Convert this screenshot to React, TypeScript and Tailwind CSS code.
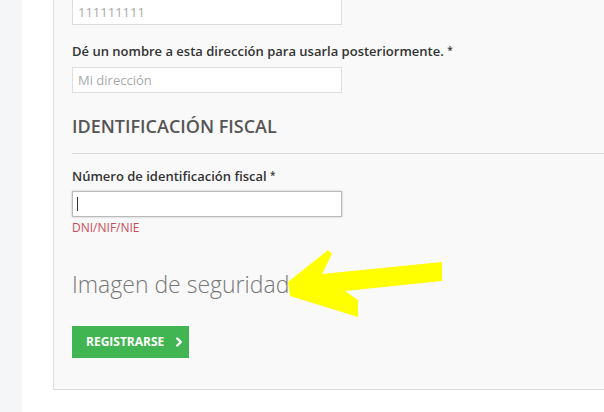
import { ChevronRight } from 'lucide-react'

function Label({ text }: { text: string }) {
  return (
    <label className="block text-[13px] leading-[18px] font-semibold text-[#333]">
      {text} <sup className="text-[10px] relative -top-[2px]">*</sup>
    </label>
  )
}

export default function App() {
  return (
    <div className="flex h-[412px] w-[604px] overflow-hidden bg-white font-['Open_Sans',sans-serif]">
      {/* left strip */}
      <div className="w-[22px] shrink-0 bg-[#f5f6f8]" />
      <div className="flex-1 pl-[31px] relative">
        {/* form card */}
        <div className="w-[600px] h-[391px] border-l border-b border-[#dcdcdc] bg-[#f9f9f9] pl-[18px] pb-[32px]">
          <input
            className="-mt-px block w-[270px] h-[26px] border border-[#ddd] bg-white px-[5px] text-[13px] placeholder:text-[#aaa] outline-none"
            placeholder="111111111"
          />

          <div className="mt-[17px]">
            <Label text="Dé un nombre a esta dirección para usarla posteriormente." />
          </div>
          <input
            className="mt-[7px] block w-[270px] h-[26px] border border-[#ddd] bg-white px-[5px] text-[13px] placeholder:text-[#aaa] outline-none"
            placeholder="Mi dirección"
          />

          <h2 className="mt-[21px] text-[18px] leading-[24px] font-semibold text-[#555]">
            IDENTIFICACIÓN FISCAL
          </h2>
          <div className="mt-[15px] h-px bg-[#ddd]" />

          <div className="mt-[13px]">
            <Label text="Número de identificación fiscal" />
          </div>
          <div className="mt-[6px] w-[270px] h-[26px] border border-[#bbb] bg-white shadow-[0_0_2px_rgba(0,0,0,0.25)] flex items-center pl-[4px]">
            <span className="w-px h-[14px] bg-[#333]" />
          </div>
          <p className="mt-[3px] text-[12px] leading-[16px] text-[#cc4b57]">DNI/NIF/NIE</p>

          <h3 className="mt-[32px] text-[23px] leading-[32px] font-light text-[#777]">
            Imagen de seguridad
          </h3>

          <button className="mt-[26px] h-[32px] w-[117px] bg-[#41b552] text-white text-[12px] font-bold flex items-center pl-[14px] gap-[8px]">
            REGISTRARSE
            <ChevronRight size={14} strokeWidth={4} />
          </button>
        </div>

        {/* yellow arrow annotation */}
        <svg className="absolute left-0 top-0" width="582" height="412" viewBox="22 0 582 412">
          <polygon
            points="288,282 328,250 332,254 322,274 442,262 442,281 345,291 358,300 358,317 290,296"
            fill="#ffff00"
          />
        </svg>
      </div>
    </div>
  )
}
